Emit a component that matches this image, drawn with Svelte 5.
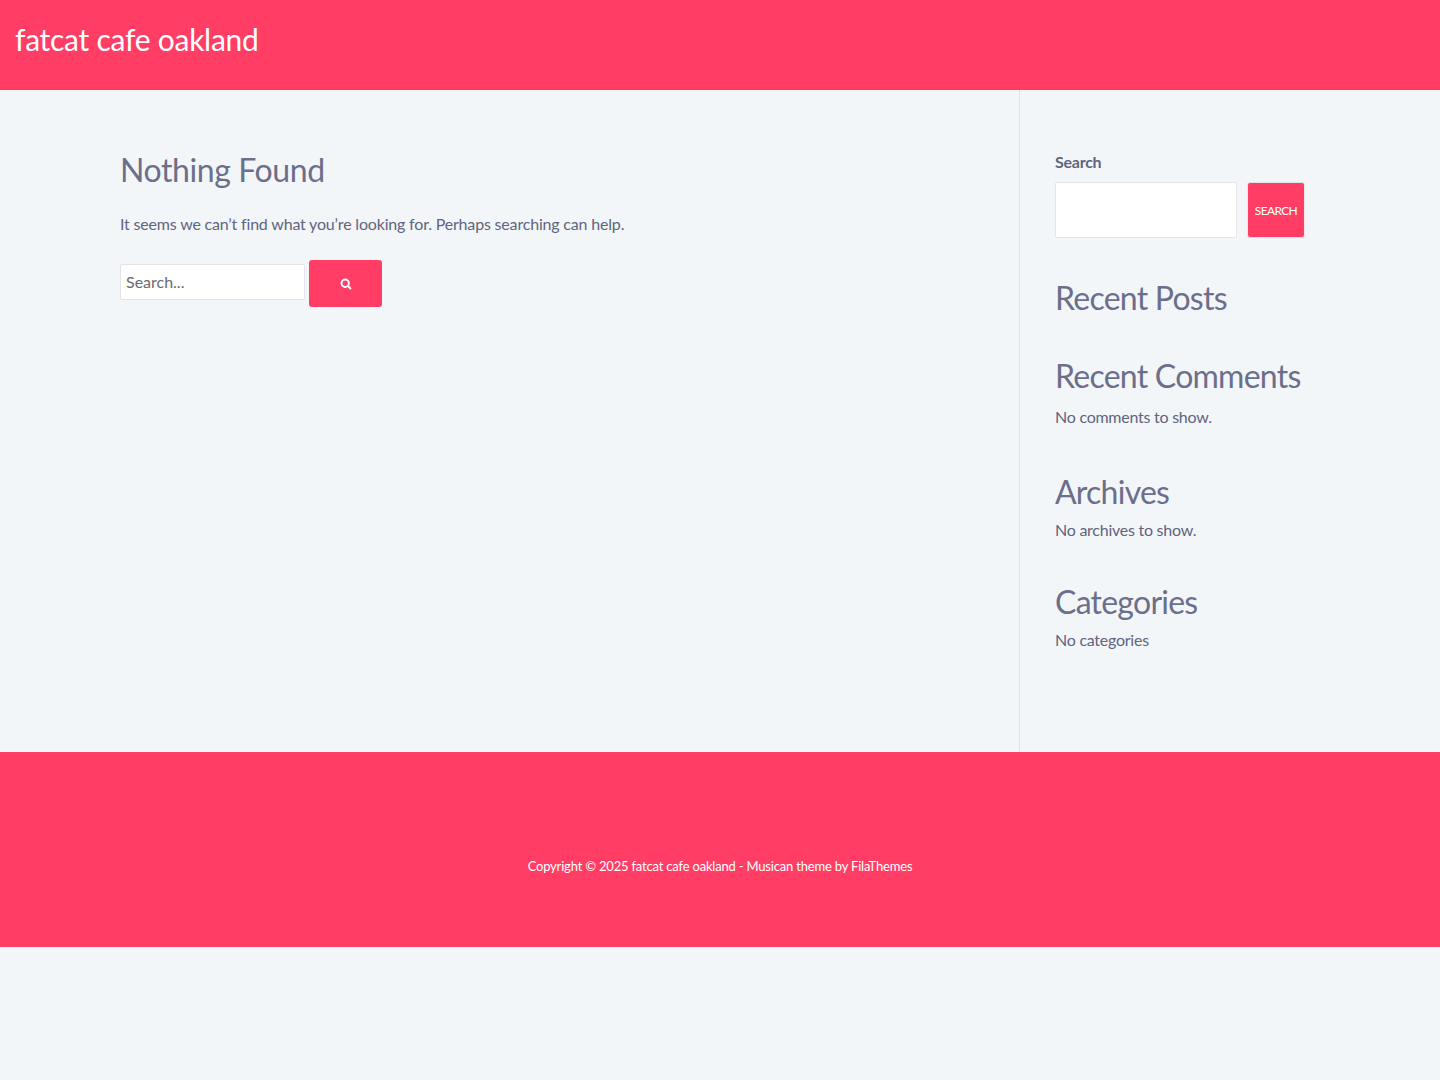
<script>
	const widgets = [
		{ title: 'Recent Posts', text: '', kind: 'first' },
		{ title: 'Recent Comments', text: 'No comments to show.', kind: 'comments' },
		{ title: 'Archives', text: 'No archives to show.', kind: 'archives' },
		{ title: 'Categories', text: 'No categories', kind: 'categories' }
	]
</script>

<div class="page">
	<header class="masthead">
		<a class="brand" href="#top">fatcat cafe oakland</a>
	</header>

	<div class="content">
		<main class="main">
			<h1>Nothing Found</h1>
			<p class="lead">It seems we can’t find what you’re looking for. Perhaps searching can help.</p>
			<form class="search-form">
				<input class="search-field" type="search" placeholder="Search..." />
				<button class="search-submit" type="button" aria-label="Search">
					<svg viewBox="0 0 12 12" width="12" height="12">
						<circle cx="5.2" cy="5.2" r="3.7" fill="none" stroke="currentColor" stroke-width="2" />
						<line x1="8" y1="8" x2="11" y2="11" stroke="currentColor" stroke-width="2" />
					</svg>
				</button>
			</form>
		</main>

		<aside class="sidebar">
			<form class="block-search">
				<label for="side-search">Search</label>
				<div class="block-row">
					<input id="side-search" type="search" />
					<button type="button">SEARCH</button>
				</div>
			</form>

			{#each widgets as w}
				<section class="widget {w.kind}">
					<h2>{w.title}</h2>
					{#if w.text}<p>{w.text}</p>{/if}
				</section>
			{/each}
		</aside>
	</div>

	<footer class="colophon">
		<p>Copyright © 2025 fatcat cafe oakland - Musican theme by <a href="#top">FilaThemes</a></p>
	</footer>
</div>

<style>
	:global(body) {
		background: #f3f6f8;
		font-family: "Lato", "Noto Sans", sans-serif;
	}

	.page {
		color: #5f6480;
		font-size: 16px;
	}

	.masthead {
		height: 90px;
		box-sizing: border-box;
		padding: 20px 15px 0;
		background: #ff3d65;
	}

	.brand {
		color: #fff;
		font-size: 30px;
		line-height: 38px;
		letter-spacing: -0.26px;
		text-decoration: none;
	}

	.content {
		display: flex;
		height: 662px;
	}

	.main {
		width: 1020px;
		box-sizing: border-box;
		padding: 60px 120px 0;
		border-right: 1px solid #dfe3e8;
	}

	h1, h2 {
		margin: 0;
		font-weight: 400;
		font-size: 32px;
		line-height: 40px;
		color: #6b6f8b;
	}

	h1 {
		letter-spacing: -0.4px;
	}

	h2 {
		letter-spacing: -0.75px;
		white-space: nowrap;
	}

	.lead {
		margin: 22px 0 0;
		line-height: 24px;
		letter-spacing: -0.18px;
	}

	.search-form {
		display: flex;
		align-items: flex-start;
		gap: 4px;
		margin-top: 24px;
	}

	input {
		box-sizing: border-box;
		background: #fff;
		border: 1px solid #e2e4e8;
		border-radius: 2px;
		font: inherit;
		outline: none;
	}

	.search-field {
		width: 185px;
		height: 36px;
		margin-top: 4px;
		padding: 0 5px 2px;
	}

	.search-field::placeholder {
		color: #6b6b6b;
		opacity: 1;
	}

	.search-submit {
		width: 73px;
		height: 47px;
		display: flex;
		align-items: center;
		justify-content: center;
		padding: 0;
		background: #ff3d65;
		color: #fff;
		border: 0;
		border-radius: 3px;
	}

	.sidebar {
		flex: 1;
		padding: 60px 135px 0 35px;
	}

	.block-search label {
		display: block;
		font-weight: 700;
		line-height: 24px;
		letter-spacing: -0.25px;
	}

	.block-row {
		display: flex;
		gap: 10px;
		margin-top: 8px;
	}

	.block-row input {
		width: 182px;
		height: 56px;
	}

	.block-row button {
		width: 58px;
		height: 56px;
		padding: 0;
		background: #ff3d65;
		color: #fff;
		border: 1px solid #e2e4e8;
		border-radius: 3px;
		font: inherit;
		font-size: 12px;
		letter-spacing: -0.65px;
	}

	.widget p {
		margin: 6px 0 0;
		line-height: 24px;
		letter-spacing: -0.25px;
	}

	.widget.first {
		margin-top: 40px;
	}

	.widget.comments {
		margin-top: 38px;
	}

	.widget.comments p {
		margin-top: 9px;
	}

	.widget.archives {
		margin-top: 43px;
	}

	.widget.categories {
		margin-top: 40px;
	}

	.colophon {
		height: 195px;
		box-sizing: border-box;
		padding-top: 104px;
		background: #ff3d65;
		color: #fff;
		text-align: center;
		font-size: 13px;
		line-height: 20px;
		letter-spacing: -0.19px;
	}

	.colophon p {
		margin: 0;
	}

	.colophon a {
		color: inherit;
		text-decoration: none;
	}
</style>
